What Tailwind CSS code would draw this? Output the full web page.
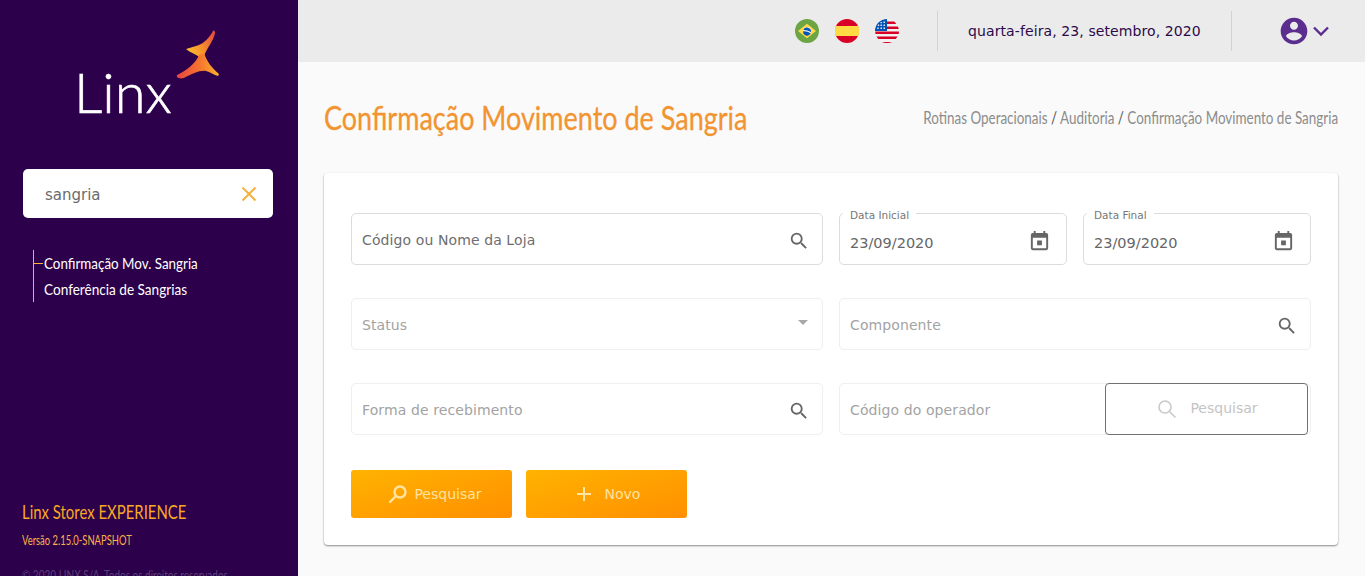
<!DOCTYPE html>
<html lang="pt-BR">
<head>
<meta charset="utf-8">
<title>Confirmação Movimento de Sangria</title>
<script src="https://cdn.jsdelivr.net/npm/@tailwindcss/browser@4"></script>
</head>
<body class="m-0 overflow-hidden font-['DejaVu_Sans',sans-serif]">
<div class="flex h-[576px] w-[1365px] overflow-hidden bg-[#fafafa]">
  <!-- Sidebar -->
  <aside class="flex h-[576px] w-[298px] shrink-0 flex-col overflow-hidden bg-[#2c004b] font-['Lato',sans-serif]">
    <div class="relative h-[169px] shrink-0">
      <span class="absolute left-[74px] top-[56px] text-[56px] font-light leading-[72px] text-white [-webkit-text-stroke:0.6px_white]">Linx</span>
      <svg class="absolute left-[170px] top-[26px]" width="54" height="56" viewBox="170 26 54 56">
        <defs>
          <linearGradient id="lg" gradientUnits="userSpaceOnUse" x1="178" y1="70" x2="218" y2="70"><stop offset="0" stop-color="#e8483f"/><stop offset="0.5" stop-color="#f4702f"/><stop offset="1" stop-color="#fcae2c"/></linearGradient>
          <linearGradient id="lu" gradientUnits="userSpaceOnUse" x1="188" y1="50" x2="214" y2="36"><stop offset="0" stop-color="#fdb92c"/><stop offset="0.5" stop-color="#f58a2e"/><stop offset="1" stop-color="#e8503c"/></linearGradient>
        </defs>
        <path fill="url(#lu)" d="M213 31C210 37 204 44 196 46L186 49C190 53 197 54 200 58L204 56C207 48 214 40 215 33C215 31 214 30 213 31Z"/>
        <path fill="url(#lg)" d="M199 55C196 63 186 71 177 75C176 78 180 79 184 78C192 74 200 70 206 71C210 72 214 75 218 76L219 74C212 68 207 62 204 53Z"/>
      </svg>
    </div>
    <div class="ml-[23px] flex h-[49px] w-[250px] items-center justify-between rounded-[5px] bg-white pl-[22px] pr-[15px]">
      <span class="mt-[4px] font-['DejaVu_Sans',sans-serif] text-[15px] text-[#6b6b6b]">sangria</span>
      <svg width="18" height="18" viewBox="0 0 18 18" fill="none" stroke="#f3b13f" stroke-width="2"><path d="M2.500 2.500l13 13M15.500 2.500l-13 13"/></svg>
    </div>
    <div class="relative ml-[33px] mt-[32px] h-[52px] pl-[11px] text-[16px] leading-[26px] text-white">
      <span class="absolute left-0 top-0 h-[52px] w-px bg-[#ffb13d]"></span>
      <span class="absolute left-0 top-[13px] h-px w-[10px] bg-[#ffb13d]"></span>
      <div class="origin-left scale-x-[0.837] whitespace-nowrap">Confirmação Mov. Sangria</div>
      <div class="origin-left scale-x-[0.85] whitespace-nowrap">Conferência de Sangrias</div>
    </div>
    <div class="mt-auto pl-[22px]">
      <div class="origin-left scale-x-[0.785] whitespace-nowrap text-[19px] leading-[22px] text-[#f9a825]">Linx Storex EXPERIENCE</div>
      <div class="mt-[10px] origin-left scale-x-[0.753] whitespace-nowrap text-[12.500px] leading-[16px] text-[#f9b24a]">Versão 2.15.0-SNAPSHOT</div>
      <div class="mt-[19px] -mb-[8px] origin-left scale-x-[0.8] whitespace-nowrap text-[12.500px] leading-[16px] text-[#5b3f78]">© 2020 LINX S/A. Todos os direitos reservados.</div>
    </div>
  </aside>

  <div class="flex min-w-0 flex-1 flex-col">
    <!-- Header -->
    <header class="flex h-[62px] shrink-0 items-center bg-[#ebebeb]">
      <div class="ml-[497px] flex gap-[16px]">
        <svg width="24" height="24" viewBox="0 0 24 24"><circle cx="12" cy="12" r="12" fill="#6da544"/><path fill="#ffda44" d="M12 4.700L21 12l-9 7.300L3 12z"/><circle cx="12" cy="12" r="4" fill="#f0f0f0"/><path fill="#0052b4" d="M8.300 11a4 4 0 0 1 7.600 2.200C13.800 11.600 11 10.900 8.300 11zM8.100 12.300c2.800-.2 5.400.5 7.500 2.200a4 4 0 0 1-7.500-2.200z"/></svg>
        <svg width="24" height="24" viewBox="0 0 24 24"><circle cx="12" cy="12" r="12" fill="#d80027"/><path fill="#ffda44" d="M.8 7h22.400a12 12 0 0 1 0 10H.8a12 12 0 0 1 0-10z"/></svg>
        <svg width="24" height="24" viewBox="0 0 24 24"><circle cx="12" cy="12" r="12" fill="#f0f0f0"/><path fill="#d80027" d="M11.500 2.500h7.800a12 12 0 0 1 2 2.500h-9.800zM11.500 7.500h11.300a12 12 0 0 1 1 2.500H11.500zM.2 12.500h23.800a12 12 0 0 1-.3 2.500H.5zM1.500 17.500h21a12 12 0 0 1-1.700 2.500H3.200zM7 22.900h10a12 12 0 0 1-10 0z"/><path fill="#0052b4" d="M12 0v12H0A12 12 0 0 1 12 0z"/><path fill="#f0f0f0" d="M8.500 2.500h1.400v1.400H8.500zM5.500 2.900h1.400v1.400H5.500zM8.500 5.500h1.400v1.400H8.500zM5.500 5.500h1.400v1.400H5.500zM2.800 5.500h1.400v1.400H2.800zM8.500 8.500h1.400v1.400H8.500zM5.500 8.500h1.400v1.400H5.500zM2.200 8.500h1.400v1.400H2.200z"/></svg>
      </div>
      <div class="ml-[38px] h-[40px] w-px bg-[#d2d2d2]"></div>
      <div class="ml-[30px] w-[263px] whitespace-nowrap text-[14px] tracking-[0.1px] text-[#2c0a4a]">quarta-feira, 23, setembro, 2020</div>
      <div class="h-[40px] w-px bg-[#d2d2d2]"></div>
      <svg class="ml-[46px]" width="32" height="32" viewBox="0 0 24 24" fill="#5b2d8e"><path d="M12 2C6.480 2 2 6.480 2 12s4.480 10 10 10 10-4.480 10-10S17.520 2 12 2zm0 3c1.660 0 3 1.340 3 3s-1.340 3-3 3-3-1.340-3-3 1.340-3 3-3zm0 14.200c-2.500 0-4.710-1.280-6-3.220.03-1.990 4-3.080 6-3.080 1.990 0 5.970 1.090 6 3.080-1.290 1.940-3.500 3.220-6 3.220z"/></svg>
      <svg class="ml-[2px]" width="18" height="12" viewBox="0 0 18 12" fill="none" stroke="#5b2d8e" stroke-width="2.400"><path d="M2 2.500l7 7 7-7"/></svg>
    </header>

    <main class="flex-1 pl-[26px] pr-[27px]">
      <div class="flex h-[111px] items-center justify-between">
        <h1 class="w-[422px] shrink-0 origin-left scale-x-[0.818] whitespace-nowrap font-['Lato',sans-serif] text-[33px] font-normal text-[#f29430] [-webkit-text-stroke:0.3px_#f29430]">Confirmação Movimento de Sangria</h1>
        <div class="shrink-0 origin-right scale-x-[0.79] whitespace-nowrap font-['Lato',sans-serif] text-[17px] text-[#8c8c8c]">Rotinas Operacionais <span class="text-[#555]">/</span> Auditoria <span class="text-[#555]">/</span> Confirmação Movimento de Sangria</div>
      </div>

      <section class="flex h-[372px] flex-col gap-[33px] rounded-[4px] bg-white px-[27px] pt-[40px] shadow-[0_1px_2px_rgba(0,0,0,0.45)]">
        <!-- Row 1 -->
        <div class="flex gap-[16px]">
          <div class="flex h-[52px] w-[472px] items-center justify-between rounded-[5px] border border-[#dcdcdc] pl-[10px] pr-[12px] text-[14px] tracking-[0.1px] text-[#6e6e6e]">
            <span class="mt-[2px]">Código ou Nome da Loja</span>
            <svg class="mt-[3px]" width="22" height="22" viewBox="0 0 24 24" fill="#666"><path d="M15.500 14h-.79l-.28-.27A6.471 6.471 0 0 0 16 9.500 6.500 6.500 0 1 0 9.500 16c1.610 0 3.090-.59 4.230-1.570l.27.28v.79l5 4.990L20.490 19l-4.990-5zm-6 0C7.010 14 5 11.990 5 9.500S7.010 5 9.500 5 14 7.010 14 9.500 11.990 14 9.500 14z"/></svg>
          </div>
          <div class="relative flex h-[52px] w-[228px] items-center justify-between rounded-[5px] border border-[#dcdcdc] pl-[10px] pr-[15px] pt-[9px] text-[14.500px] text-[#666]">
            <span class="absolute -top-[5px] left-[3px] bg-white px-[7px] text-[10.500px] leading-[13px] text-[#777]">Data Inicial</span>
            <span>23/09/2020</span>
            <svg class="-mt-[5px]" width="23" height="23" viewBox="0 0 24 24" fill="#666"><path d="M19 3h-1V1h-2v2H8V1H6v2H5c-1.110 0-1.990.9-1.990 2L3 19c0 1.100.89 2 2 2h14c1.100 0 2-.9 2-2V5c0-1.100-.9-2-2-2zm0 16H5V8h14v11zM9.500 11h5v5h-5z"/></svg>
          </div>
          <div class="relative flex h-[52px] w-[228px] items-center justify-between rounded-[5px] border border-[#dcdcdc] pl-[10px] pr-[15px] pt-[9px] text-[14.500px] text-[#666]">
            <span class="absolute -top-[5px] left-[3px] bg-white px-[7px] text-[10.500px] leading-[13px] text-[#777]">Data Final</span>
            <span>23/09/2020</span>
            <svg class="-mt-[5px]" width="23" height="23" viewBox="0 0 24 24" fill="#666"><path d="M19 3h-1V1h-2v2H8V1H6v2H5c-1.110 0-1.990.9-1.990 2L3 19c0 1.100.89 2 2 2h14c1.100 0 2-.9 2-2V5c0-1.100-.9-2-2-2zm0 16H5V8h14v11zM9.500 11h5v5h-5z"/></svg>
          </div>
        </div>
        <!-- Row 2 -->
        <div class="flex gap-[16px]">
          <div class="flex h-[52px] w-[472px] items-center justify-between rounded-[5px] border border-[#efefef] pl-[10px] pr-[14px] text-[14px] tracking-[0.1px] text-[#a3a3a3]">
            <span class="mt-[2px]">Status</span>
            <span class="-mt-[3px] h-0 w-0 border-x-[5px] border-t-[5px] border-x-transparent border-t-[#a8a8a8]"></span>
          </div>
          <div class="flex h-[52px] w-[472px] items-center justify-between rounded-[5px] border border-[#efefef] pl-[10px] pr-[12px] text-[14px] tracking-[0.1px] text-[#a3a3a3]">
            <span class="mt-[2px]">Componente</span>
            <svg class="mt-[3px]" width="22" height="22" viewBox="0 0 24 24" fill="#666"><path d="M15.500 14h-.79l-.28-.27A6.471 6.471 0 0 0 16 9.500 6.500 6.500 0 1 0 9.500 16c1.610 0 3.090-.59 4.230-1.570l.27.28v.79l5 4.990L20.490 19l-4.990-5zm-6 0C7.010 14 5 11.990 5 9.500S7.010 5 9.500 5 14 7.010 14 9.500 11.990 14 9.500 14z"/></svg>
          </div>
        </div>
        <!-- Row 3 -->
        <div class="flex gap-[16px]">
          <div class="flex h-[52px] w-[472px] items-center justify-between rounded-[5px] border border-[#efefef] pl-[10px] pr-[12px] text-[14px] tracking-[0.1px] text-[#a3a3a3]">
            <span class="mt-[2px]">Forma de recebimento</span>
            <svg class="mt-[3px]" width="22" height="22" viewBox="0 0 24 24" fill="#666"><path d="M15.500 14h-.79l-.28-.27A6.471 6.471 0 0 0 16 9.500 6.500 6.500 0 1 0 9.500 16c1.610 0 3.090-.59 4.230-1.570l.27.28v.79l5 4.990L20.490 19l-4.990-5zm-6 0C7.010 14 5 11.990 5 9.500S7.010 5 9.500 5 14 7.010 14 9.500 11.990 14 9.500 14z"/></svg>
          </div>
          <div class="relative flex h-[52px] w-[472px] items-center rounded-[5px] border border-[#efefef] pl-[10px] text-[14px] tracking-[0.1px] text-[#a3a3a3]">
            <span class="mt-[2px]">Código do operador</span>
            <div class="absolute -top-px left-[265px] flex h-[52px] w-[203px] items-center justify-center gap-[13px] rounded-[4px] border border-[#707070] bg-white pl-[2px] tracking-normal text-[#c4c4c4]">
              <svg width="20" height="20" viewBox="0 0 20 20" fill="none" stroke="#c9c9c9" stroke-width="1.600"><circle cx="8" cy="8" r="6"/><path d="M12.500 12.500l6 6"/></svg>
              <span class="-mt-[2px]">Pesquisar</span>
            </div>
          </div>
        </div>
        <!-- Buttons -->
        <div class="mt-[2px] flex gap-[14px]">
          <button class="flex h-[48px] w-[161px] items-center justify-center gap-[6px] rounded-[3px] bg-linear-to-br from-[#ffb300] to-[#ff8f00] pl-[7px] text-[14px] text-[#ffe3a0]">
            <svg width="20" height="20" viewBox="0 0 20 20" fill="none" stroke="#ffe3a0" stroke-width="2.400"><circle cx="12" cy="8" r="5.500"/><path d="M8 12l-6 6" stroke-linecap="round"/></svg>
            <span>Pesquisar</span>
          </button>
          <button class="flex h-[48px] w-[161px] items-center justify-center gap-[13px] rounded-[3px] bg-linear-to-br from-[#ffb300] to-[#ff8f00] pl-[3px] text-[14px] text-[#ffe3a0]">
            <svg width="16" height="16" viewBox="0 0 16 16" fill="none" stroke="#ffe3a0" stroke-width="2"><path d="M8 1v14M1 8h14"/></svg>
            <span>Novo</span>
          </button>
        </div>
      </section>
    </main>
  </div>
</div>
</body>
</html>
